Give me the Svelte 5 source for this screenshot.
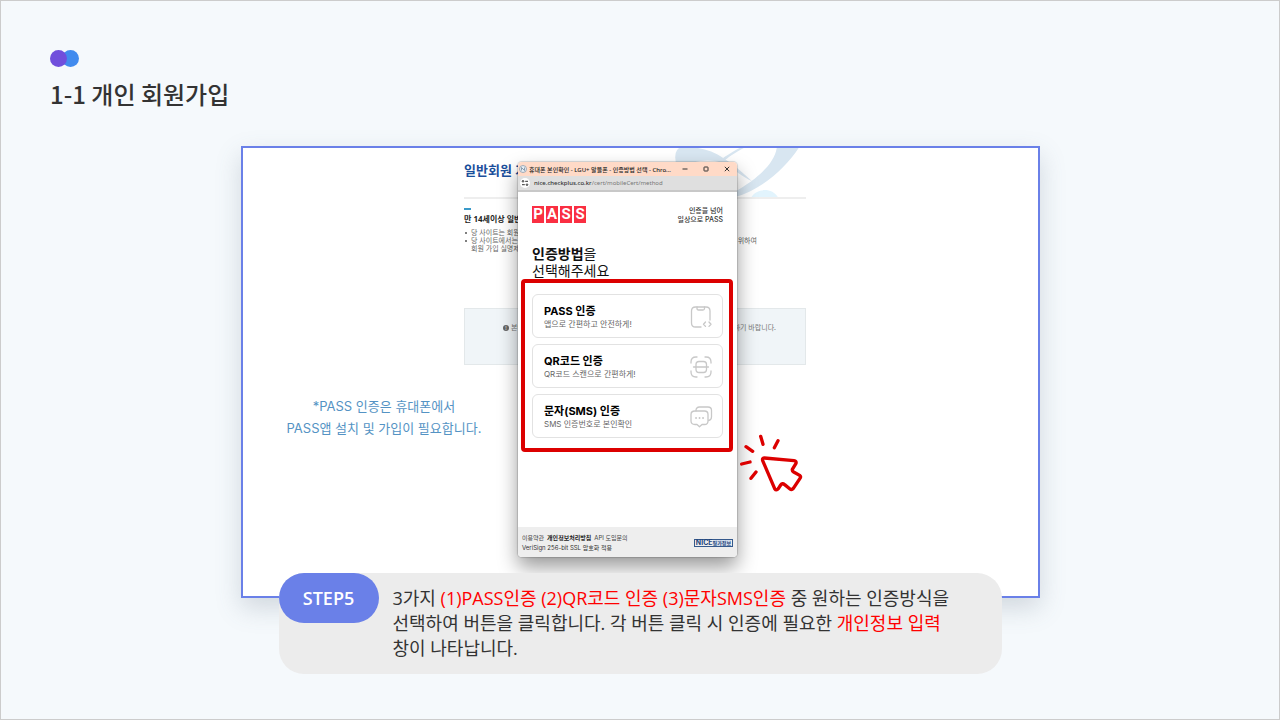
<script>
  const methods = [
    { icon: 'phone', title: 'PASS 인증', note: '앱으로 간편하고 안전하게!' },
    { icon: 'scan', title: 'QR코드 인증', note: 'QR코드 스캔으로 간편하게!' },
    { icon: 'chat', title: '문자(SMS) 인증', note: 'SMS 인증번호로 본인확인' }
  ];
</script>

<main class="page">
  <header>
    <svg class="dots" viewBox="0 0 30 18" aria-hidden="true">
      <circle cx="20.5" cy="8.5" r="8.5" fill="#418bee" />
      <circle cx="8.5" cy="8.5" r="8.5" fill="#704fdc" />
    </svg>
    <h1>1-1 개인 회원가입</h1>
  </header>

  <section class="stage">
    <div class="site">
      <svg class="swoosh" viewBox="40 24 400 150" aria-hidden="true">
        <path d="M48 64 Q43 35 58 24 H115 C170 32 215 66 278 124 C250 110 215 82 185 68 C150 56 100 60 48 90Z" fill="#d8e6f1" />
        <path d="M253 24 C230 36 205 52 190 66 L182 60 C202 46 222 34 240 24Z" fill="#d8e6f1" />
        <path d="M352 24 H418 C380 82 310 148 225 172 L225 156 C290 120 345 72 352 24Z" fill="#d8e6f1" />
        <path d="M275 173 C290 143 340 143 356 173Z" fill="#e2f4fd" />
      </svg>
      <h2>일반회원 가</h2>
      <div class="dash"></div>
      <h3>만 14세이상 일반</h3>
      <ul>
        <li>당 사이트는 회원</li>
        <li class="split"><span>당 사이트에서는</span><span>위하여</span></li>
        <li class="plain">회원 가입 실명제</li>
      </ul>
      <div class="notice">
        <span class="left"><i>!</i>본인</span><span>하기 바랍니다.</span>
      </div>
    </div>

    <p class="aside">*PASS 인증은 휴대폰에서<br />PASS앱 설치 및 가입이 필요합니다.</p>

    <div class="popup">
      <div class="titlebar">
        <svg class="globe" viewBox="0 0 16 16" aria-hidden="true">
          <circle cx="8" cy="8" r="7" fill="#e6edf3" stroke="#8397aa" stroke-width="1.5" />
          <path d="M5 11V5L11 11V5" fill="none" stroke="#6c8298" stroke-width="1.5" />
        </svg>
        <span class="name">휴대폰 본인확인 - LGU+ 알뜰폰 - 인증방법 선택 - Chro...</span>
        <button aria-label="최소화"><svg viewBox="0 0 6 6"><path d="M0.5 3H5.5" /></svg></button>
        <button aria-label="최대화"><svg viewBox="0 0 6 6"><rect x="1" y="1" width="4" height="4" rx="0.5" /></svg></button>
        <button aria-label="닫기"><svg viewBox="0 0 6 6"><path d="M0.8 0.8 5.2 5.2M5.2 0.8 0.8 5.2" /></svg></button>
      </div>
      <div class="urlbar">
        <span class="tune">
          <svg viewBox="0 0 10 10" aria-hidden="true"><circle cx="3" cy="3.3" r="0.8" /><path d="M5.2 3.3H8M2 6.7H4.800" /><circle cx="7" cy="6.7" r="0.8" /></svg>
        </span>
        <span><b>nice.checkplus.co.kr</b>/cert/mobileCert/method</span>
      </div>

      <div class="brand">
        <div class="pass"><span>P</span><span>A</span><span>S</span><span>S</span></div>
        <p>인증을 넘어<br />일상으로 PASS</p>
      </div>
      <h2 class="question"><b>인증방법</b>을<br />선택해주세요</h2>

      <div class="frame">
        {#each methods as m}
          <button class="method">
            <span class="words"><strong>{m.title}</strong><small>{m.note}</small></span>
            <svg viewBox="0 0 24 24" aria-hidden="true">
              {#if m.icon === 'phone'}
                <path d="M12 22H6.500Q2.500 22 2.500 18V6Q2.500 2 6.500 2H17Q21 2 21 6V15" />
                <path d="M8 2V3.500Q8 5 9.500 5H14Q15.500 5 15.500 3.500V2" />
                <path d="M16.500 17 14.500 19.200 16.500 21.400M20 17 22 19.200 20 21.400" />
              {:else if m.icon === 'scan'}
                <path d="M2 8V7Q2 2 7 2H8M16 2H17Q22 2 22 7V8M22 16V17Q22 22 17 22H16M8 22H7Q2 22 2 17V16" />
                <rect x="7" y="6.500" width="10.500" height="11" rx="3" />
                <path d="M4.500 12H19.500" />
              {:else}
                <path d="M7 6V5.500Q7 2 10.500 2H19Q22.500 2 22.500 5.500V12Q22.500 15 19.500 15.500" />
                <path d="M6 6H15.500Q19 6 19 9.500V16Q19 19.500 15.500 19.500H13L10.500 21.800 8 19.500H6Q2 19.500 2 16V9.500Q2 6 6 6Z" />
                <path class="typing" d="M7 13H7.100M10.500 13H10.600M14 13H14.100" />
              {/if}
            </svg>
          </button>
        {/each}
      </div>

      <footer>
        <div>
          <a href="#terms">이용약관</a><a href="#privacy" class="strong">개인정보처리방침</a><a href="#api">API 도입문의</a>
          <p>VeriSign 256-bit SSL 암호화 적용</p>
        </div>
        <span class="nice"><b>NICE</b><em>평가정보</em></span>
      </footer>
    </div>

    <svg class="click" viewBox="54 36 198 186" aria-hidden="true">
      <path d="M133 114 222 122Q230 123 228 130L217 148Q216 153 221 156L239 166Q244 170 240 175L220 205Q215 211 209 206L194 194Q187 188 182 195L175 206Q169 213 164 206L128 122Q126 114 133 114Z" />
      <path d="M122 49 129 73M174 62 163 83M78 80 98 94M65 132 90 126M108 156 93 175" />
    </svg>
  </section>

  <section class="callout">
    <strong class="step">STEP5</strong>
    <p>3가지 <em>(1)PASS인증 (2)QR코드 인증 (3)문자SMS인증</em> 중 원하는 인증방식을 선택하여 버튼을 클릭합니다. 각 버튼 클릭 시 인증에 필요한 <em>개인정보 입력</em> 창이 나타납니다.</p>
  </section>
</main>

<style>
  :global(body) { margin: 0; }
  * { box-sizing: border-box; }
  h1, h2, h3, p, ul { margin: 0; padding: 0; font-weight: 400; }
  em, i { font-style: normal; }
  button { border: 0; padding: 0; background: none; font: inherit; color: inherit; }
  svg { display: block; flex: none; }

  .page {
    min-height: 100vh;
    padding-bottom: 45px;
    border: 1px solid #ccc;
    background: #f5f9fc;
    color: #333;
    font-family: "Noto Sans", "Noto Sans CJK KR", sans-serif;
  }
  header { padding: 49px 49px 0; }
  .dots { width: 30px; height: 18px; }
  h1 { margin-top: 8px; font-size: 24px; line-height: 36px; font-weight: 500; font-family: "Noto Sans CJK KR", sans-serif; }

  .stage {
    position: relative;
    max-width: 799px;
    min-height: 452px;
    margin: 34px auto 0;
    border: 2px solid #6a80e8;
    background: #fff;
    box-shadow: 0 10px 24px rgba(80, 100, 120, 0.22);
    font-family: Inter, "Noto Sans CJK KR", sans-serif;
  }

  .site {
    position: relative;
    left: -5px;
    width: 342px;
    margin: 0 auto;
    padding-top: 11px;
    font-family: "Noto Sans", "Noto Sans CJK KR", sans-serif;
  }
  .swoosh { position: absolute; top: 0; right: 0; width: 133px; height: 50px; }
  .site h2 { position: relative; padding-bottom: 16px; border-bottom: 2px solid #eee; font-size: 13px; line-height: 22px; font-weight: 700; color: #1b4f9c; }
  .dash { width: 7px; height: 2px; margin-top: 9px; background: #3a9ac9; }
  h3 { margin-top: 3px; font-size: 8px; line-height: 12px; font-weight: 700; color: #222; }
  ul { margin-top: 4px; width: 293px; list-style: none; font-size: 7px; line-height: 8px; color: #666; }
  li { position: relative; padding-left: 7px; }
  li:not(.plain)::before { content: ""; position: absolute; left: 1px; top: 3px; width: 2px; height: 2px; border-radius: 1px; background: #555; }
  .split { display: flex; justify-content: space-between; }
  .notice {
    display: flex;
    justify-content: space-between;
    height: 57px;
    margin-top: 55px;
    padding: 14px 29px 0 38px;
    border: 1px solid #e3e8ea;
    background: #f0f5f8;
    font-size: 7px;
    line-height: 10px;
    color: #777;
  }
  .left { display: flex; align-items: center; gap: 2px; height: 10px; }
  .left i { width: 6px; height: 6px; border-radius: 3px; background: #666; color: #fff; font-size: 5px; line-height: 6px; text-align: center; }

  .aside { position: absolute; left: 44px; top: 247px; text-align: center; font-size: 13px; line-height: 22px; color: #5493c4; }

  .popup {
    position: absolute;
    left: calc(50% - 122px);
    top: 14px;
    display: flex;
    flex-direction: column;
    width: 219px;
    min-height: 395px;
    border-radius: 4px;
    background: #fff;
    color: #333;
    overflow: hidden;
    box-shadow: 0 0 1px 1px rgba(0, 0, 0, 0.15), 0 10px 20px rgba(0, 0, 0, 0.4);
  }
  .titlebar { display: flex; align-items: center; height: 14px; background: #ffdac7; color: #222; font-size: 6px; font-family: "Noto Sans", "Noto Sans CJK KR", sans-serif; }
  .globe { width: 8px; height: 8px; margin: 0 2px 0 1px; }
  .name { flex: 1; white-space: nowrap; overflow: hidden; font-weight: 500; }
  .titlebar button { width: 21px; }
  .titlebar button svg { width: 6px; height: 6px; margin: 0 auto; fill: none; stroke: #333; stroke-width: 1; }
  .urlbar { display: flex; align-items: center; gap: 4px; height: 16px; padding-left: 2px; border-bottom: 2px solid #c8c8c8; background: #dfdfdf; font: 6px/12px "Noto Sans", sans-serif; color: #777; }
  .urlbar b { font-weight: 500; color: #333; }
  .tune { width: 10px; height: 10px; border-radius: 5px; background: #fff; }
  .tune svg { width: 10px; height: 10px; fill: none; stroke: #333; stroke-width: 1; }

  .brand { display: flex; justify-content: space-between; padding: 13px 14px 0; }
  .pass { display: flex; gap: 2px; padding-top: 1px; }
  .pass span { width: 12px; height: 17px; background: #fa2f42; color: #fff; font: 700 15px/17px Roboto, sans-serif; text-align: center; }
  .brand p { padding-top: 1px; text-align: right; font-size: 7px; line-height: 9px; font-weight: 500; }
  .question { margin: 21px 14px 0; font-size: 14px; line-height: 17px; color: #111; }

  .frame { display: flex; flex-direction: column; gap: 6px; margin: 0 4px 0 3px; padding: 11px 6px 10px 7px; border: 4px solid #dc0000; border-radius: 4px; background: #fff; }
  .method { display: flex; align-items: center; justify-content: space-between; height: 44px; padding: 2px 9px 0 11px; border: 1px solid #e2e2e2; border-radius: 6px; background: #fff; text-align: left; }
  .words { display: flex; flex-direction: column; }
  .words strong { font-size: 11px; line-height: 14px; font-weight: 700; color: #000; }
  .words small { font-size: 8px; line-height: 12px; color: #666; }
  .method svg { width: 24px; height: 24px; fill: none; stroke: #c8c8c8; stroke-width: 1.3; stroke-linecap: round; stroke-linejoin: round; }
  .method .typing { stroke-width: 1.8; }

  footer { display: flex; justify-content: space-between; align-items: center; height: 30px; margin-top: auto; padding: 1px 4px 0; background: #eee; font-size: 6px; line-height: 10px; }
  footer div { line-height: 10px; }
  footer a { margin-right: 3px; color: #444; text-decoration: none; }
  footer .strong { font-weight: 700; color: #222; }
  .nice { display: flex; align-items: center; height: 8px; padding: 0 1px; border: 1px solid #35598c; font-size: 7px; line-height: 6px; color: #24477d; }
  .nice em { background: #d3dcea; font-size: 5px; line-height: 6px; font-weight: 700; }

  .click { position: absolute; left: calc(50% + 98px); top: 284px; width: 66px; height: 62px; fill: none; stroke: #dc0000; stroke-width: 10; stroke-linecap: round; stroke-linejoin: round; }

  .callout {
    position: relative;
    display: flex;
    align-items: flex-start;
    gap: 14px;
    max-width: 723px;
    margin: -25px auto 0;
    padding-right: 40px;
    border-radius: 25px;
    background: #ececec;
    font-family: "Open Sans", "Noto Sans CJK KR", sans-serif;
  }
  .step { flex: none; width: 100px; border-radius: 25px; background: #6a80e8; color: #fff; font-size: 18px; line-height: 50px; font-weight: 600; text-align: center; }
  .callout p { padding: 13px 0; font-size: 18px; line-height: 25px; word-break: keep-all; }
  .callout em { color: #f00; }
</style>
